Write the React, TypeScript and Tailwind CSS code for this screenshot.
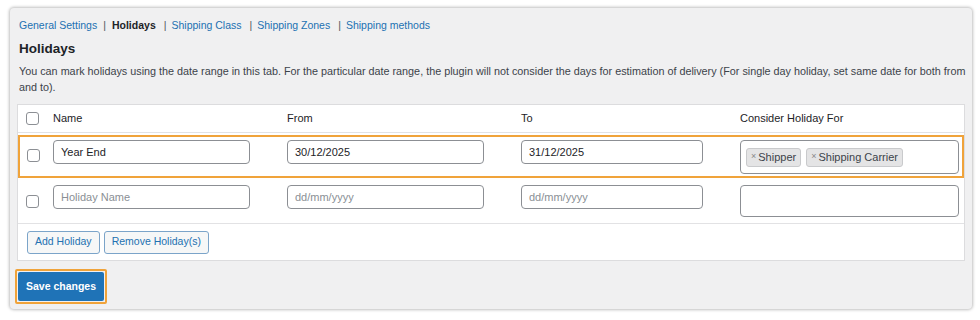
const font = { fontFamily: '"Liberation Sans", Arial, sans-serif' }

function Checkbox() {
  return <span className="block h-[13px] w-[13px] rounded-[3px] border border-[#8c8f94] bg-white" />
}

function Field({ value, placeholder, width }: { value?: string; placeholder?: string; width: string }) {
  return (
    <div
      className={`flex h-[24px] items-center rounded-[4px] border border-[#8c8f94] bg-white px-[7px] text-[11px] ${width} ${
        value ? "text-[#1d2327]" : "text-[#8a8f95]"
      }`}
    >
      {value || placeholder}
    </div>
  )
}

function Tag({ label }: { label: string }) {
  return (
    <span className="flex h-[19px] items-center gap-[2px] rounded-[3px] border border-[#c9cacc] bg-[#e4e4e5] px-[4px] text-[11px] text-[#3c434a]">
      <span className="text-[9px] text-[#888]">×</span>
      {label}
    </span>
  )
}

export default function App() {
  return (
    <div className="h-[320px] w-[980px] bg-white pt-[8px] pl-[10px]" style={font}>
      <div className="h-[301px] w-[962px] rounded-[4px] bg-[#f0f0f1] pt-[10px] pl-[7px] shadow-[0_0_3px_1px_rgba(0,0,0,0.25)]">
        <div className="flex items-center pl-[2px] text-[10.5px] leading-[14px] text-[#2271b1]">
          <span>General Settings</span>
          <span className="px-[6px] text-[#50575e]">|</span>
          <span className="font-bold text-[#1d2327]">Holidays</span>
          <span className="pr-[5px] pl-[8px] text-[#50575e]">|</span>
          <span>Shipping Class</span>
          <span className="pr-[5px] pl-[8px] text-[#50575e]">|</span>
          <span>Shipping Zones</span>
          <span className="pr-[5px] pl-[8px] text-[#50575e]">|</span>
          <span>Shipping methods</span>
        </div>
        <h2 className="mt-[8px] pl-[2px] text-[13.5px] font-semibold leading-[18px] text-[#1d2327]">Holidays</h2>
        <p className="mt-[5px] w-[952px] pl-[2px] text-[10.8px] leading-[16px] text-[#3c434a]">
          You can mark holidays using the date range in this tab. For the particular date range, the plugin will not consider the days for estimation of delivery (For single day holiday, set same date for both from and to).
        </p>

        <div className="mt-[9px] w-[948px] border border-[#dcdcde] bg-white">
          <div className="flex h-[28px] items-center border-b border-[#e2e2e4] text-[11px] text-[#1d2327]">
            <div className="w-[35px] pl-[8px]">
              <Checkbox />
            </div>
            <div className="w-[234px]">Name</div>
            <div className="w-[234px]">From</div>
            <div className="w-[219px]">To</div>
            <div>Consider Holiday For</div>
          </div>

          <div className="mt-[2px] flex h-[43px] w-[946px] items-start border-2 border-[#f0a33a] pt-[3px]">
            <div className="w-[33px] pt-[9px] pl-[7px]">
              <Checkbox />
            </div>
            <div className="w-[234px]">
              <Field value="Year End" width="w-[197px]" />
            </div>
            <div className="w-[234px]">
              <Field value="30/12/2025" width="w-[197px]" />
            </div>
            <div className="w-[219px]">
              <Field value="31/12/2025" width="w-[182px]" />
            </div>
            <div className="flex h-[34px] w-[219px] items-center gap-[5px] rounded-[4px] border border-[#8c8f94] bg-white px-[5px]">
              <Tag label="Shipper" />
              <Tag label="Shipping Carrier" />
            </div>
          </div>

          <div className="flex h-[46px] items-start border-b border-[#e2e2e4] pt-[7px]">
            <div className="w-[35px] pt-[10px] pl-[8px]">
              <Checkbox />
            </div>
            <div className="w-[234px]">
              <Field placeholder="Holiday Name" width="w-[197px]" />
            </div>
            <div className="w-[234px]">
              <Field placeholder="dd/mm/yyyy" width="w-[197px]" />
            </div>
            <div className="w-[219px]">
              <Field placeholder="dd/mm/yyyy" width="w-[182px]" />
            </div>
            <div className="h-[32px] w-[219px] rounded-[4px] border border-[#8c8f94] bg-white" />
          </div>

          <div className="flex h-[36px] items-center gap-[4px] pl-[9px]">
            <button className="h-[23px] rounded-[3px] border border-[#7ba4c9] bg-[#f6f7f7] px-[7px] text-[10.5px] text-[#2271b1]">
              Add Holiday
            </button>
            <button className="h-[23px] rounded-[3px] border border-[#7ba4c9] bg-[#f6f7f7] px-[7px] text-[10.5px] text-[#2271b1]">
              Remove Holiday(s)
            </button>
          </div>
        </div>

        <div className="mt-[8px] -ml-[2px] inline-block rounded-[2px] border-2 border-[#f0a33a] p-[1px]">
          <button className="h-[29px] rounded-[2px] bg-[#1f73b7] px-[8px] text-[10.5px] font-semibold text-white">
            Save changes
          </button>
        </div>
      </div>
    </div>
  )
}
